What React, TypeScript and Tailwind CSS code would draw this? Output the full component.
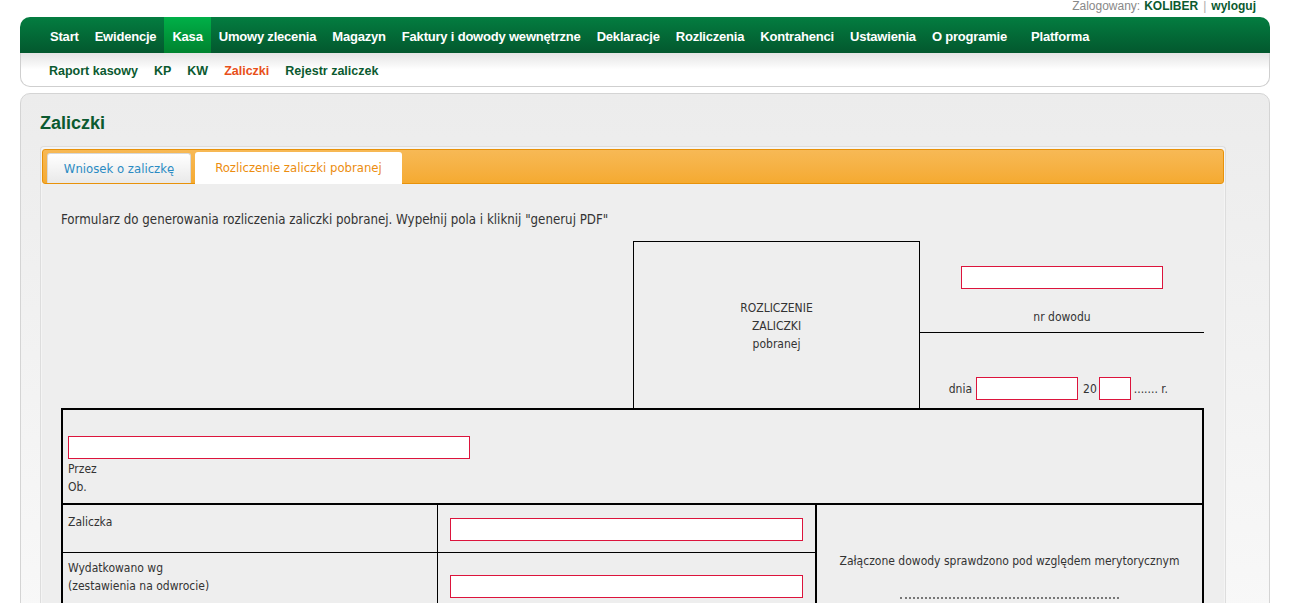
import React from "react";

const mainNav = [
  "Start",
  "Ewidencje",
  "Kasa",
  "Umowy zlecenia",
  "Magazyn",
  "Faktury i dowody wewnętrzne",
  "Deklaracje",
  "Rozliczenia",
  "Kontrahenci",
  "Ustawienia",
  "O programie",
  "Platforma",
];

const subNav = ["Raport kasowy", "KP", "KW", "Zaliczki", "Rejestr zaliczek"];

const Field = ({ className = "" }: { className?: string }) => (
  <div className={`bg-white border border-[#dc143c] h-[23px] ${className}`} />
);

export default function App() {
  return (
    <div className="min-h-screen bg-white font-['Liberation_Sans',sans-serif] text-[12px] text-[#333]">
      {/* login line */}
      <div className="flex justify-end w-[1256px] h-[17px] leading-[12px] text-[12px]">
        <span className="text-[#888]">Zalogowany:</span>
        <span className="ml-1 font-bold text-[#0b5a30]">KOLIBER</span>
        <span className="mx-[5px] text-[#aaa]">|</span>
        <span className="font-bold text-[#0b5a30]">wyloguj</span>
      </div>

      {/* menu */}
      <div className="ml-5 w-[1250px]">
        <div className="h-[36px] rounded-t-[10px] bg-gradient-to-b from-[#037d40] to-[#03582e] flex pl-[22px]">
          {mainNav.map((item) => (
            <div
              key={item}
              className={`h-full flex items-center pt-[3px] px-2 font-bold text-white text-[13px] tracking-[-0.2px] ${
                item === "Kasa" ? "bg-gradient-to-b from-[#00b048] to-[#00832f]" : ""
              } ${item === "Platforma" ? "ml-[8px]" : ""}`}
            >
              {item}
            </div>
          ))}
        </div>
        <div className="h-[34px] bg-gradient-to-b from-[#e4e4e4] via-white to-white border border-t-0 border-[#cfcfcf] rounded-b-[10px] flex items-center pt-[3px] pl-[28px] gap-4 font-bold text-[12.5px] text-[#0b5a30]">
          {subNav.map((s) => (
            <span key={s} className={s === "Zaliczki" ? "text-[#e8501a]" : ""}>
              {s}
            </span>
          ))}
        </div>
      </div>

      {/* main panel */}
      <div className="ml-5 w-[1250px] mt-[6px] border border-[#d4d4d4] rounded-t-[10px] bg-gradient-to-b from-[#ececec] to-[#f9f9f9] pt-[18px] pl-[19px] pr-[43px]">
        <h1 className="font-bold text-[18px] leading-[22px] text-[#0b5a30] mb-[12px]">Zaliczki</h1>

        <div className="border border-[#dddddd] border-b-0 rounded-t-[4px] pt-[2px] px-[1px] bg-[#f4f4f4]">
          {/* tabs */}
          <div className="h-[35px] rounded-[3px] border border-[#e8920a] bg-gradient-to-b from-[#f7b955] to-[#f5aa30] flex items-end pl-[4px] gap-[4px]">
            <div className="h-[30px] w-[144px] justify-center flex items-center rounded-t-[3px] border border-b-0 border-[#d8d8d8] bg-gradient-to-b from-white to-[#e9e9e9] text-[#2b8bc3] text-[13px] font-['DejaVu_Sans_Condensed','DejaVu_Sans',sans-serif]">
              Wniosek o zaliczkę
            </div>
            <div className="h-[32px] w-[207px] justify-center flex items-center rounded-t-[3px] bg-white text-[#ec8d10] text-[13px] font-['DejaVu_Sans_Condensed','DejaVu_Sans',sans-serif] -mb-px">
              Rozliczenie zaliczki pobranej
            </div>
          </div>

          {/* content */}
          <div className="bg-[#eeeeee] pt-[27px] pl-[19px] pr-[20px] pb-10 font-['DejaVu_Sans_Condensed','DejaVu_Sans',sans-serif] text-[12px] text-[#333]">
            <p className="leading-[17px] text-[13.2px]">
              Formularz do generowania rozliczenia zaliczki pobranej. Wypełnij pola i kliknij "generuj PDF"
            </p>

            {/* header block */}
            <div className="flex mt-[13px] w-[1143px]">
              <div className="w-[572px]" />
              <div className="w-[287px] h-[167px] border border-b-0 border-black flex flex-col items-center justify-center text-center leading-[18px] pt-[2px]">
                <span>ROZLICZENIE</span>
                <span>ZALICZKI</span>
                <span>pobranej</span>
              </div>
              <div className="flex-1 flex flex-col">
                <div className="h-[92px] border-b border-black flex flex-col items-center pt-[25px]">
                  <Field className="w-[202px]" />
                  <span className="mt-[20px] leading-[16px]">nr dowodu</span>
                </div>
                <div className="flex items-center justify-end pr-[36px] mt-[44px]">
                  <span className="mr-[4px]">dnia</span>
                  <Field className="w-[102px]" />
                  <span className="ml-[5px] mr-[2px]">20</span>
                  <Field className="w-[32px]" />
                  <span className="ml-[3px]">....... r.</span>
                </div>
              </div>
            </div>

            {/* main table */}
            <div className="w-[1143px] border-2 border-black">
              <div className="h-[93px] pl-[5px] pt-[26px] leading-[18px]">
                <Field className="w-[402px]" />
                <div className="mt-[1px]">Przez</div>
                <div>Ob.</div>
              </div>
              <div className="flex border-t-2 border-black">
                <div className="flex-1 flex flex-col">
                  <div className="flex h-[48px] border-b border-black">
                    <div className="w-[375px] border-r border-black pl-[5px] pt-[8px]">Zaliczka</div>
                    <div className="flex-1 flex items-start pt-[13px] pl-[12px]">
                      <Field className="w-[353px]" />
                    </div>
                  </div>
                  <div className="flex h-[60px]">
                    <div className="w-[375px] border-r border-black pl-[5px] pt-[6px] leading-[18px]">
                      <div>Wydatkowano wg</div>
                      <div>(zestawienia na odwrocie)</div>
                    </div>
                    <div className="flex-1 flex items-start pt-[22px] pl-[12px]">
                      <Field className="w-[353px]" />
                    </div>
                  </div>
                </div>
                <div className="w-[387px] border-l-2 border-black flex flex-col items-center pt-[48px]">
                  <span className="leading-[16px]">Załączone dowody sprawdzono pod względem merytorycznym</span>
                  <div className="mt-[28px] w-[219px] border-t-2 border-dotted border-[#777]" />
                </div>
              </div>
            </div>
          </div>
        </div>
      </div>
    </div>
  );
}
